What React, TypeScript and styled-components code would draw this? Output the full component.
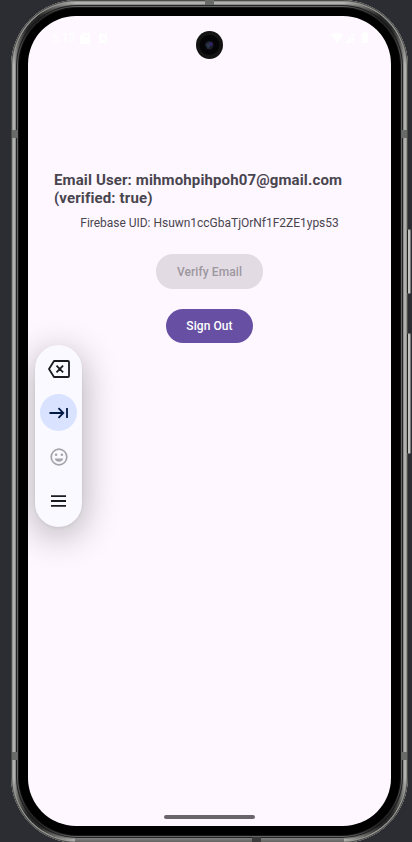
import React from "react";
import styled, { createGlobalStyle } from "styled-components";

const GlobalStyle = createGlobalStyle`
  * { box-sizing: border-box; }
  body { margin: 0; background: #2c2d32; font-family: Roboto, sans-serif; overflow: hidden; }
`;

const Desk = styled.main`
  height: 842px;
  width: 412px;
  padding-left: 11px;
  overflow: hidden;
  background: #2c2d32;
`;

const Frame = styled.div`
  position: relative;
  width: 397px;
  height: 843px;
  padding: 16px 17px 17px;
  border-radius: 66px;
  background: #000;
  box-shadow:
    inset 0 0 0 1px #4b4c4a,
    inset 0 0 0 2px #92938f,
    inset 0 0 0 4px #b1b1af,
    inset 0 0 0 5px #8b8b89,
    inset 0 0 0 6px #242424,
    inset 0 0 0 7px #656565,
    inset 0 0 0 8px #141414;
`;

const CornerShade = styled.div<{ $side: "left" | "right"; $edge: "top" | "bottom" }>`
  position: absolute;
  ${(p) => p.$side}: 2px;
  ${(p) => p.$edge}: 2px;
  width: 80px;
  height: 80px;
  border-${(p) => p.$edge}: 5px solid #171717;
  border-${(p) => p.$side}: 5px solid #171717;
  border-${(p) => p.$edge}-${(p) => p.$side}-radius: 64px;
  mask-image: radial-gradient(
    circle at ${(p) => (p.$side === "left" ? "20px" : "60px")} ${(p) => (p.$edge === "top" ? "20px" : "60px")},
    rgba(0, 0, 0, 0.9) 8px,
    transparent 46px
  );
`;

const BottomRim = styled.i`
  position: absolute;
  left: 64px;
  right: 64px;
  bottom: 1px;
  height: 4px;
  background: linear-gradient(#828280, #636361);
`;

const Band = styled.i<{ $x: number; $y: number; $w: number; $h: number; $dark?: boolean }>`
  position: absolute;
  left: ${(p) => p.$x}px;
  top: ${(p) => p.$y}px;
  width: ${(p) => p.$w}px;
  height: ${(p) => p.$h}px;
  background: ${(p) => (p.$dark ? "#3c3c3c" : "#686b68")};
`;

const SideKey = styled.i<{ $y: number; $h: number }>`
  position: absolute;
  left: 396px;
  top: ${(p) => p.$y}px;
  width: 4px;
  height: ${(p) => p.$h}px;
  border: 1px solid #777;
  border-left-color: #222;
  border-radius: 0 2px 2px 0;
  background: #c0c0be;
`;

const Screen = styled.section`
  position: relative;
  width: 363px;
  height: 810px;
  border-radius: 48px;
  background: #fef7ff;
  overflow: hidden;
  display: flex;
  flex-direction: column;
`;

const StatusBar = styled.header`
  height: 44px;
  padding: 13px 23px 0 24px;
  display: flex;
  justify-content: space-between;
  align-items: flex-start;
  color: #fff;
  font-size: 12px;
  line-height: 18px;
  svg { display: block; }
`;

const StatusGroup = styled.div<{ $gap: number }>`
  display: flex;
  align-items: center;
  gap: ${(p) => p.$gap}px;
  height: 18px;
`;

const Camera = styled.div`
  position: absolute;
  left: 168px;
  top: 15px;
  width: 27px;
  height: 28px;
`;

const Content = styled.div`
  flex: 1;
  padding: 111px 26px 0;
  display: flex;
  flex-direction: column;
  align-items: center;
  color: #49454f;
`;

const Title = styled.h1`
  align-self: stretch;
  margin: 0;
  font-size: 15px;
  font-weight: 700;
  line-height: 18px;
  white-space: nowrap;
  letter-spacing: 0.13px;
`;

const Uid = styled.p`
  margin: 8px 0 0;
  font-size: 12px;
  line-height: 17px;
  letter-spacing: -0.02px;
  white-space: nowrap;
`;

const Button = styled.button<{ $width: number; $top: number }>`
  margin: ${(p) => p.$top}px 0 0;
  width: ${(p) => p.$width}px;
  height: 34px;
  padding: 0;
  border: 0;
  border-radius: 17px;
  background: #6750a4;
  color: #fff;
  font: 500 12px/34px Roboto, sans-serif;
  letter-spacing: 0.08px;
  &:disabled { height: 35px; background: #e3dbe4; color: #9c979f; }
`;

const KeyTray = styled.nav`
  position: absolute;
  left: 7px;
  top: 329px;
  width: 47px;
  height: 182px;
  padding: 5px 0;
  border-radius: 24px;
  background: #f9f9ff;
  box-shadow: 0 8px 36px rgba(0, 0, 0, 0.32), 0 1px 3px rgba(0, 0, 0, 0.06);
  display: flex;
  flex-direction: column;
  align-items: center;
  gap: 7px;
`;

const TrayKey = styled.span<{ $active?: boolean }>`
  flex: none;
  width: 37px;
  height: 37px;
  border-radius: 19px;
  display: grid;
  place-items: center;
  background: ${(p) => (p.$active ? "#d9e2ff" : "transparent")};
  svg { display: block; }
`;

const HomeBar = styled.div`
  align-self: center;
  width: 91px;
  height: 4px;
  margin-bottom: 7px;
  border-radius: 2px;
  background: #69656b;
`;

export default function App() {
  return (
    <>
      <GlobalStyle />
      <Desk>
        <Frame>
          <BottomRim />
          <CornerShade $side="left" $edge="top" />
          <CornerShade $side="right" $edge="top" />
          <CornerShade $side="left" $edge="bottom" />
          <CornerShade $side="right" $edge="bottom" />
          <Band $x={1} $y={130} $w={5} $h={8} />
          <Band $x={391} $y={130} $w={5} $h={8} />
          <Band $x={1} $y={752} $w={5} $h={8} />
          <Band $x={391} $y={752} $w={5} $h={8} />
          <Band $x={194} $y={0} $w={9} $h={5} />
          <Band $x={241} $y={837} $w={9} $h={5} $dark />
          <SideKey $y={229} $h={65} />
          <SideKey $y={333} $h={121} />
          <Screen>
            <StatusBar>
              <StatusGroup $gap={5}>
                <span>5:13</span>
                <svg width="10" height="11" viewBox="0 0 10 11" fill="#fff">
                  <path fillRule="evenodd" d="M3 0h6q1 0 1 1v9q0 1-1 1H1q-1 0-1-1V3zM3 2v2h1V2zm2 0v2h1V2zm2 0v2h1V2z" />
                </svg>
                <svg width="18" height="10" viewBox="1 0 18 10" fill="#fff">
                  <path fillRule="evenodd" d="M6 1h6q1 0 1 1v7q0 1-1 1H6q-1 0-1-1V2q0-1 1-1zm2.5 2L6.7 8h1l.5-1.2h1.7l.4 1.2h1L9.5 3zm.5 1 .6 2H8.4z" />
                </svg>
              </StatusGroup>
              <StatusGroup $gap={0}>
                <svg width="37" height="12" viewBox="0 0 37 12" fill="#fff">
                  <path d="M0 3Q6.3-1.6 12.5 3L6.3 11zM14 11 23 1v4h-3v6zM21 6h2v3h-2zm0 4h2v1h-2zM32 1h1V0h3v1h1v10h-6V1z" />
                </svg>
              </StatusGroup>
            </StatusBar>
            <Content>
              <Title>
                Email User: mihmohpihpoh07@gmail.com
                <br />
                (verified: true)
              </Title>
              <Uid>Firebase UID: Hsuwn1ccGbaTjOrNf1F2ZE1yps53</Uid>
              <Button $width={107} $top={22} disabled>Verify Email</Button>
              <Button $width={87} $top={20}>Sign Out</Button>
            </Content>
            <HomeBar />
            <Camera>
              <svg width="27" height="28" viewBox="0 0 27 28">
                <ellipse cx="13.5" cy="14" rx="13.5" ry="14" fill="#141414" />
                <circle cx="13.5" cy="14" r="10" fill="#050507" />
                <circle cx="13.3" cy="14.2" r="4.2" fill="#1a1e29" />
                <path d="m10 13 4-2 1 3-3 4z" fill="#2c3647" />
                <path d="m13 13 3-2 1 3-3 1z" fill="#35206c" />
              </svg>
            </Camera>
            <KeyTray>
              <TrayKey>
                <svg width="22" height="18" viewBox="0 0 22 18" fill="none" stroke="#1a1b20" strokeWidth="1.8" strokeLinejoin="round">
                  <path d="M6 1h14q1 0 1 1v14q0 1-1 1H6L1 9zM8.5 5.7l6.6 6.6m0-6.6-6.6 6.6" />
                </svg>
              </TrayKey>
              <TrayKey $active>
                <svg width="20" height="12" viewBox="0.5 0 20 12" fill="none" stroke="#001945" strokeWidth="1.8">
                  <path d="M1 6h14M10 1.2 14.8 6 10 10.8M18.5 1v10" />
                </svg>
              </TrayKey>
              <TrayKey>
                <svg width="18" height="18" viewBox="0 0 18 18" fill="none" stroke="#a4a4a9" strokeWidth="1.7">
                  <circle cx="9" cy="9" r="7.8" />
                  <circle cx="6.1" cy="6.8" r="1.3" fill="#a4a4a9" stroke="none" />
                  <circle cx="11.9" cy="6.8" r="1.3" fill="#a4a4a9" stroke="none" />
                  <path d="M4.6 10.5h8.8Q12 13.8 9 13.8t-4.4-3.3z" fill="#a4a4a9" stroke="none" />
                </svg>
              </TrayKey>
              <TrayKey>
                <svg width="15" height="12" viewBox="0 0 15 12" stroke="#1a1b20" strokeWidth="1.8">
                  <path d="M0 1.2h15M0 6h15M0 10.8h15" />
                </svg>
              </TrayKey>
            </KeyTray>
          </Screen>
        </Frame>
      </Desk>
    </>
  );
}
